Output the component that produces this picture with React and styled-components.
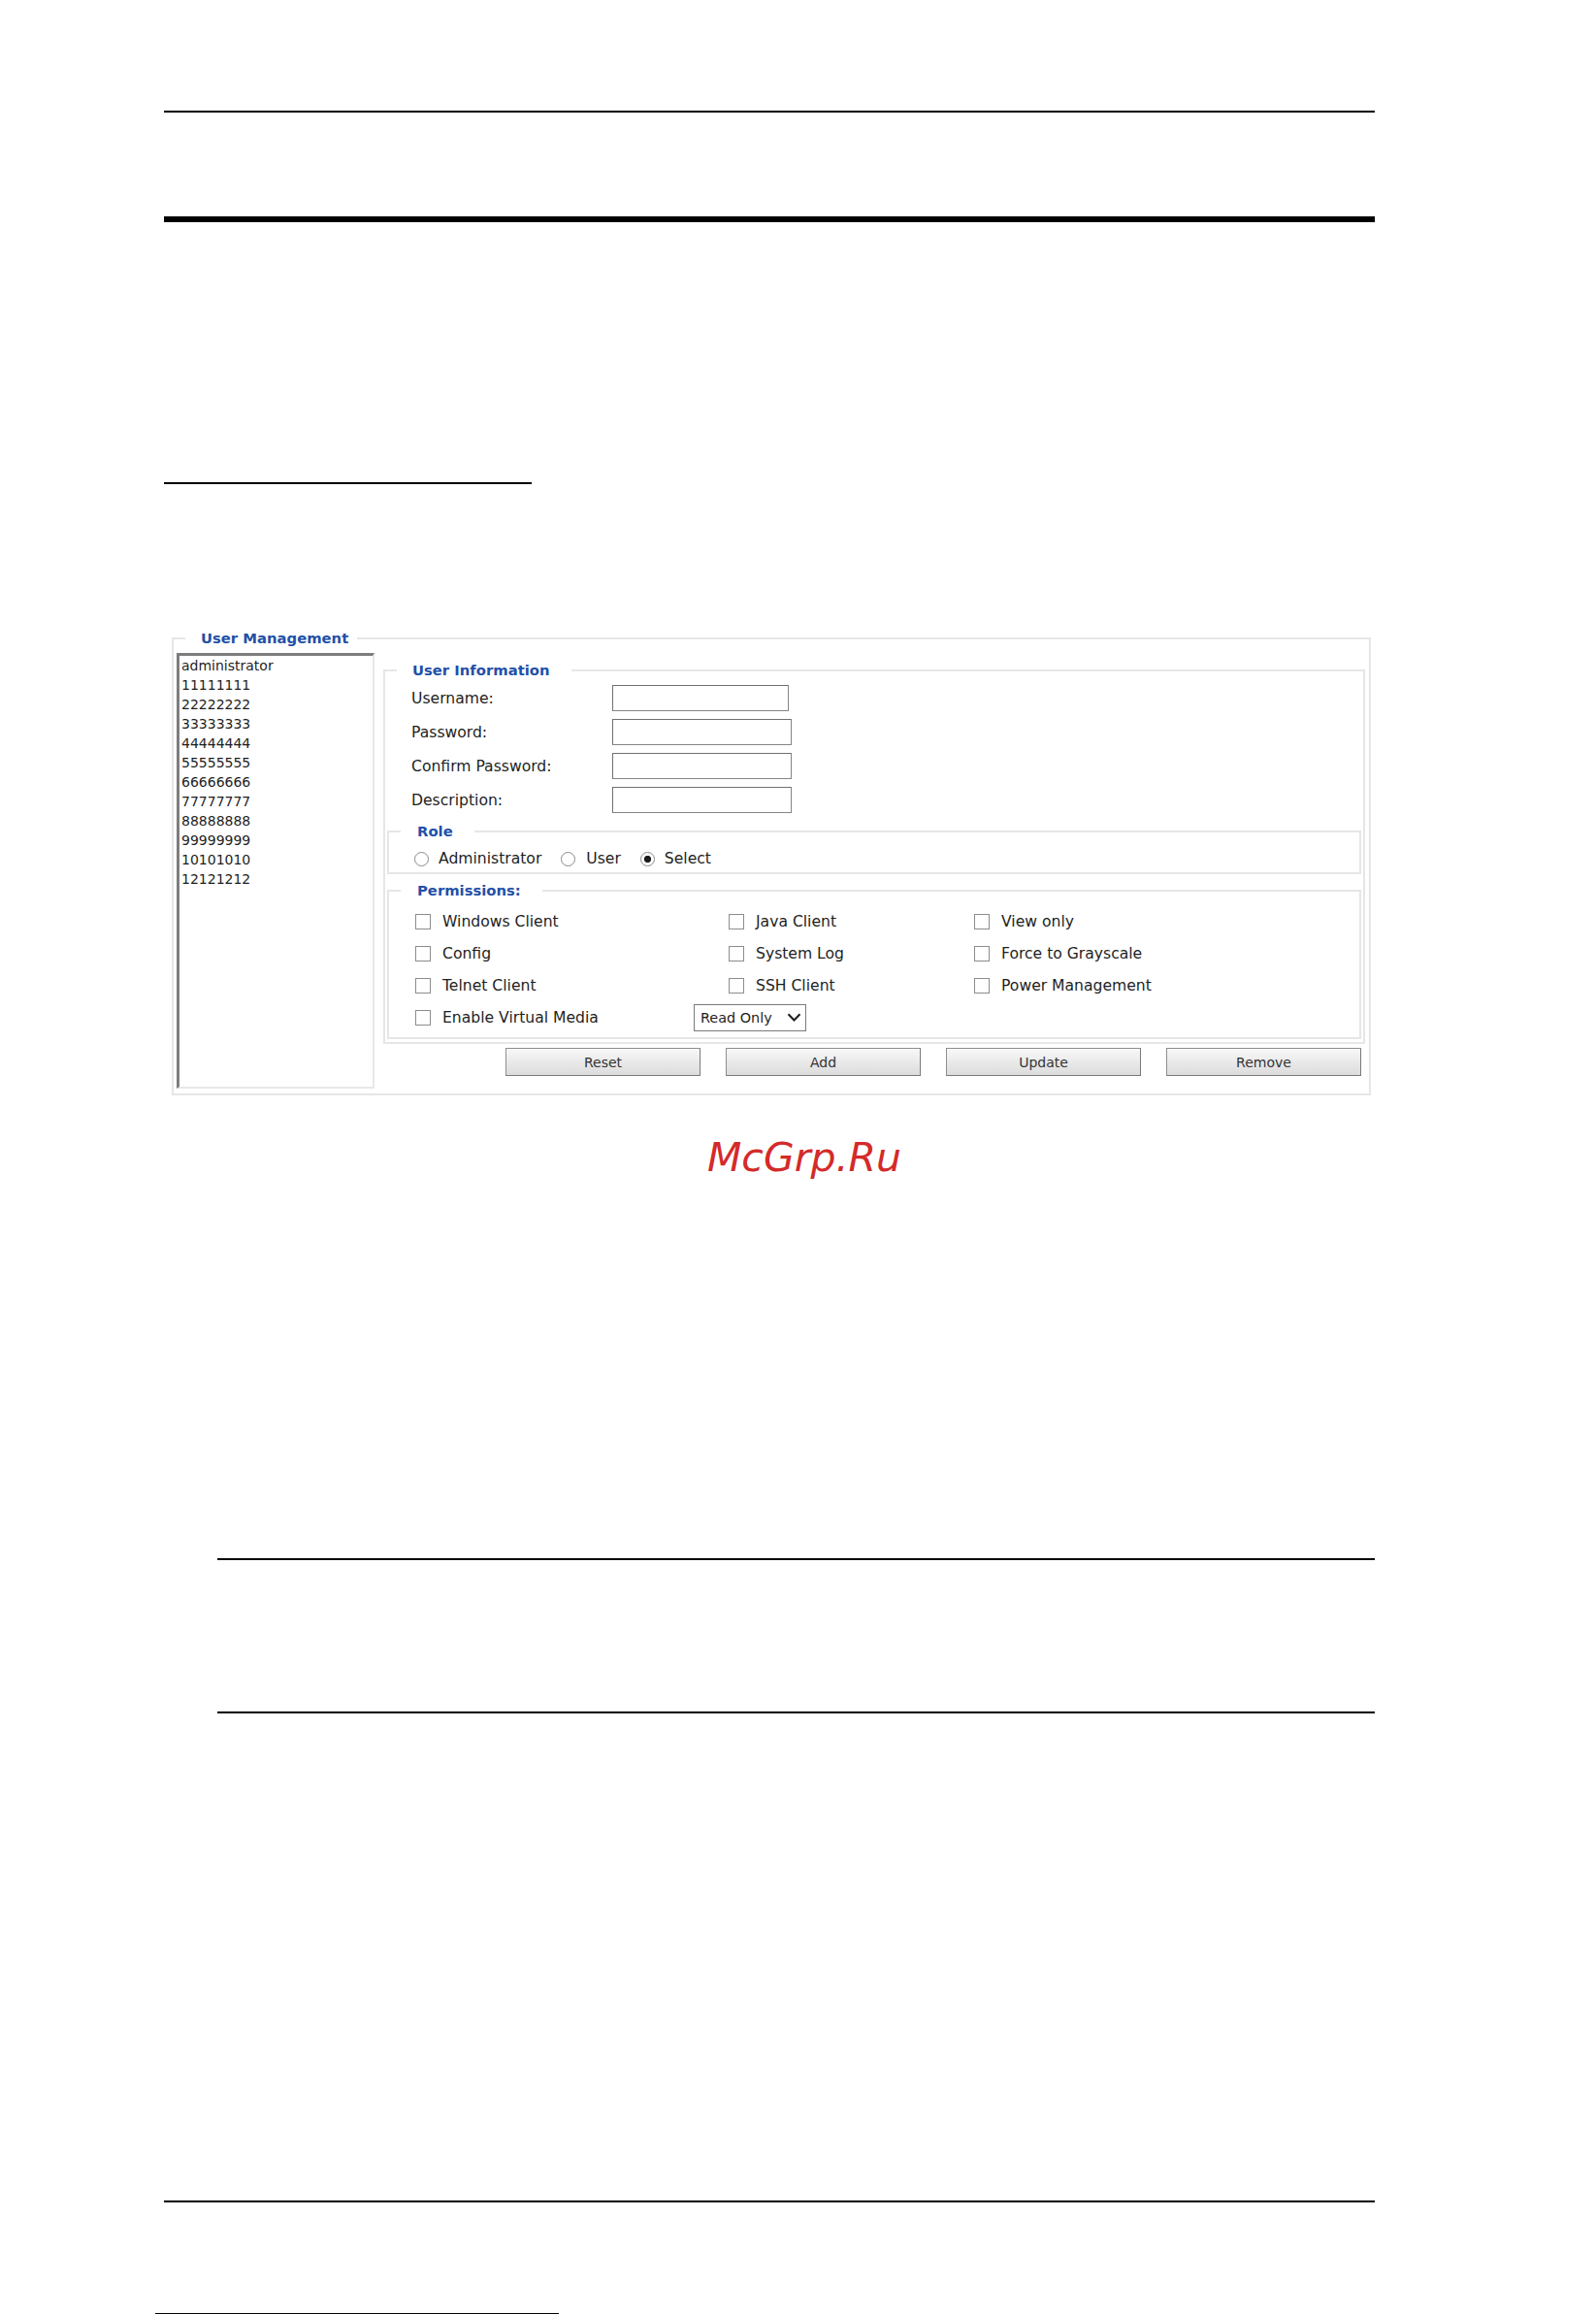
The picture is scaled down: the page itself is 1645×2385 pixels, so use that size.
import React from 'react';
import styled, { createGlobalStyle } from 'styled-components';

const GlobalStyle = createGlobalStyle`
  html, body {
    margin: 0;
    padding: 0;
    background: #fff;
  }
  body {
    font-family: "DejaVu Sans", Verdana, sans-serif;
    color: #222;
  }
`;

// Page + document rules
const Page = styled.div`
  width: 1645px;
  height: 2385px;
  overflow: hidden;
  background: #fff;
`;

const Rule = styled.div`
  margin-top: ${p => p.$top}px;
  margin-left: ${p => p.$left}px;
  width: ${p => p.$width}px;
  height: ${p => p.$h}px;
  background: #000;
`;

// Outer "User Management" frame
const Frame = styled.fieldset`
  margin: 150px 0 0 177px;
  width: 1236px;
  box-sizing: border-box;
  border: 2px solid #e6e6e6;
  padding: 6px 4px 5px 0;
  min-width: 0;
`;

const Legend = styled.legend`
  margin-left: 12px;
  padding: 0 ${p => p.$padR}px 0 ${p => p.$padL}px;
  font-family: "DejaVu Sans", Verdana, sans-serif;
  font-weight: bold;
  font-size: 14.8px;
  line-height: 18px;
  color: #2250a8;
`;

const FrameBody = styled.div`
  display: flex;
  align-items: flex-start;
  gap: 9px;
  padding-left: 3px;
`;

const ListBox = styled.div`
  width: 204px;
  height: 449px;
  box-sizing: border-box;
  border-style: solid;
  border-width: 3px 2px 2px 3px;
  border-color: #7d7d7d #e8e8e8 #e8e8e8 #7d7d7d;
  padding: 0 2px;
  background: #fff;
`;

const ListItem = styled.div`
  font-size: 14px;
  line-height: 20px;
  color: #1e1e1e;
  white-space: nowrap;
`;

const RightCol = styled.div`
  flex: 1;
  min-width: 0;
  margin-top: 9px;
  display: flex;
  flex-direction: column;
`;

const Section = styled.fieldset`
  margin: ${p => p.$mt || 0}px ${p => p.$mx || 0}px 0;
  border: 2px solid #e6e6e6;
  padding: ${p => p.$pt}px 0 ${p => p.$pb}px 0;
  min-width: 0;
`;

// User information fields
const FieldGrid = styled.div`
  display: grid;
  grid-template-columns: 207px auto;
  grid-auto-rows: 35px;
  align-items: center;
  justify-items: start;
  padding-left: 27px;
`;

const FieldLabel = styled.label`
  font-size: 15.6px;
  color: #1e1e1e;
`;

const TextInput = styled.input`
  width: ${p => p.$w}px;
  height: 27px;
  box-sizing: border-box;
  margin: 0;
  padding: 2px 4px;
  border: 1px solid #858585;
  border-top-color: #707070;
  border-left-color: #707070;
  background: #fff;
  font-family: inherit;
  font-size: 14px;
`;

// Role radios
const RadioRow = styled.div`
  display: flex;
  align-items: center;
  gap: 20px;
  height: 22px;
  padding-left: 26px;
`;

const Option = styled.label`
  display: flex;
  align-items: center;
  gap: ${p => p.$gap || 10}px;
  font-size: 15.6px;
  color: #1e1e1e;
  white-space: nowrap;
`;

const Radio = styled.input.attrs({ type: 'radio' })`
  appearance: none;
  margin: 0;
  width: 15px;
  height: 15px;
  box-sizing: border-box;
  border: 1px solid #8a8a8a;
  border-radius: 50%;
  background: #fff;
  &:checked {
    background: radial-gradient(circle, #1c1c1c 0 3.3px, #fff 4px);
  }
`;

// Permissions
const PermGrid = styled.div`
  display: grid;
  grid-template-columns: 323px 253px 1fr;
  grid-auto-rows: 33px;
  align-items: center;
  padding-left: 27px;
`;

const WideRow = styled.div`
  grid-column: 1 / -1;
  display: flex;
  align-items: center;
`;

const MediaCell = styled.div`
  width: 287px;
`;

const Check = styled.input.attrs({ type: 'checkbox' })`
  appearance: none;
  margin: 0;
  width: 16px;
  height: 16px;
  box-sizing: border-box;
  border: 1px solid #8c8c8c;
  background: #fff;
`;

const Dropdown = styled.div`
  width: 116px;
  height: 28px;
  box-sizing: border-box;
  border: 1px solid #7a7a7a;
  display: flex;
  align-items: center;
  padding: 0 4px 0 6px;
  font-size: 14.4px;
  color: #1e1e1e;
  background: #fff;
`;

const Chevron = styled.svg`
  margin-left: auto;
  display: block;
`;

// Buttons
const ButtonRow = styled.div`
  display: flex;
  justify-content: flex-end;
  gap: 26px;
  margin-top: 4px;
  padding-right: 4px;
`;

const Button = styled.button`
  width: 201px;
  height: 29px;
  margin: 0;
  padding: 0;
  box-sizing: border-box;
  border: 1px solid #8e8e8e;
  border-right-color: #7a7a7a;
  border-bottom-color: #7a7a7a;
  background: linear-gradient(#f8f8f8, #dcdcdc);
  font-family: "DejaVu Sans", Verdana, sans-serif;
  font-size: 14px;
  color: #333;
`;

const Watermark = styled.div`
  margin: 44px 0 0 729px;
  font-family: "DejaVu Sans", Verdana, sans-serif;
  font-style: italic;
  font-size: 41px;
  line-height: 41px;
  color: #d42a2a;
  white-space: nowrap;
`;

const users = [
  'administrator', '11111111', '22222222', '33333333', '44444444', '55555555',
  '66666666', '77777777', '88888888', '99999999', '10101010', '12121212',
];

const fields = [
  { label: 'Username:', w: 182 },
  { label: 'Password:', w: 185, type: 'password' },
  { label: 'Confirm Password:', w: 185, type: 'password' },
  { label: 'Description:', w: 185 },
];

const perms = [
  'Windows Client', 'Java Client', 'View only',
  'Config', 'System Log', 'Force to Grayscale',
  'Telnet Client', 'SSH Client', 'Power Management',
];

export default function App() {
  return (
    <Page>
      <GlobalStyle />
      <Rule $top={114} $left={169} $width={1248} $h={2} />
      <Rule $top={107} $left={169} $width={1248} $h={6} />
      <Rule $top={268} $left={169} $width={379} $h={2} />

      <Frame>
        <Legend $padL={16} $padR={9}>User Management</Legend>
        <FrameBody>
          <ListBox>
            {users.map(u => <ListItem key={u}>{u}</ListItem>)}
          </ListBox>

          <RightCol>
            <Section $pt={2} $pb={3}>
              <Legend $padL={16} $padR={22}>User Information</Legend>
              <FieldGrid>
                {fields.map(f => (
                  <React.Fragment key={f.label}>
                    <FieldLabel>{f.label}</FieldLabel>
                    <TextInput $w={f.w} type={f.type || 'text'} />
                  </React.Fragment>
                ))}
              </FieldGrid>

              <Section $mt={6} $mx={2} $pt={8} $pb={3}>
                <Legend $padL={17} $padR={22}>Role</Legend>
                <RadioRow>
                  <Option><Radio name="role" />Administrator</Option>
                  <Option $gap={11}><Radio name="role" />User</Option>
                  <Option><Radio name="role" defaultChecked />Select</Option>
                </RadioRow>
              </Section>

              <Section $mt={8} $mx={2} $pt={6} $pb={4}>
                <Legend $padL={17} $padR={22}>Permissions:</Legend>
                <PermGrid>
                  {perms.map(p => (
                    <Option key={p} $gap={12}><Check />{p}</Option>
                  ))}
                  <WideRow>
                    <MediaCell>
                      <Option $gap={12}><Check />Enable Virtual Media</Option>
                    </MediaCell>
                    <Dropdown>
                      Read Only
                      <Chevron width="15" height="9" viewBox="0 0 15 9">
                        <polyline points="1.5,1.2 7.5,7.5 13.5,1.2" fill="none" stroke="#1e1e1e" strokeWidth="2" />
                      </Chevron>
                    </Dropdown>
                  </WideRow>
                </PermGrid>
              </Section>
            </Section>

            <ButtonRow>
              <Button>Reset</Button>
              <Button>Add</Button>
              <Button>Update</Button>
              <Button>Remove</Button>
            </ButtonRow>
          </RightCol>
        </FrameBody>
      </Frame>

      <Watermark>McGrp.Ru</Watermark>

      <Rule $top={392} $left={224} $width={1193} $h={2} />
      <Rule $top={156} $left={224} $width={1193} $h={2} />
      <Rule $top={502} $left={169} $width={1248} $h={2} />
      <Rule $top={114} $left={160} $width={416} $h={1} />
    </Page>
  );
}
